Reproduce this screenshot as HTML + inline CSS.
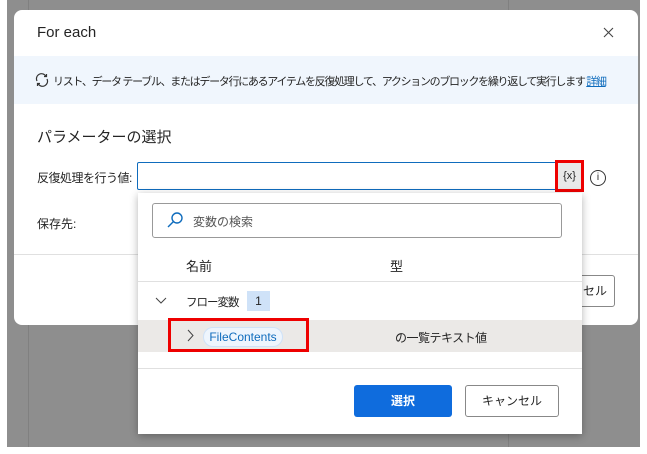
<!DOCTYPE html><html><head><meta charset="utf-8"><style>
*{box-sizing:border-box;margin:0;padding:0}
body{width:647px;height:454px;background:#fff;position:relative;overflow:hidden;font-family:"Liberation Sans","Noto Sans CJK JP",sans-serif;color:#242424}
.bg{position:absolute;left:7px;top:0;width:633px;height:447px;background:#8e8e8e}
.a{position:absolute}
</style></head><body>
<div class="bg"></div>
<div class="a" style="left:28px;top:0;width:1px;height:447px;background:#808080"></div>
<div class="a" style="left:508px;top:0;width:1px;height:447px;background:#808080"></div>
<div class="a" style="left:14px;top:10px;width:624px;height:315px;background:#fff;border-radius:8px"></div>
<div class="a" style="left:37px;top:24px;font-size:15px">For each</div>
<svg class="a" style="left:603px;top:27px" width="11" height="11"><path d="M1 1l9 9M10 1l-9 9" stroke="#444" stroke-width="1.1"/></svg>
<div class="a" style="left:14px;top:56px;width:624px;height:48px;background:#f0f6fd"></div>
<svg class="a" style="left:35px;top:73px" width="14" height="14" viewBox="0 0 14 14" fill="none" stroke="#333" stroke-width="1.2"><path d="M2 8A5 5 0 0 1 11 3.5M12 6A5 5 0 0 1 3 10.5M9 3.5h2.5V1M5 10.5H2.5V13"/></svg>
<div class="a" style="left:53px;top:73px;font-size:11px;letter-spacing:-1.3px;white-space:nowrap">リスト、データ テーブル、またはデータ行にあるアイテムを反復処理して、アクションのブロックを繰り返して実行します <span style="color:#0f6cbd;text-decoration:underline">詳細</span></div>
<div class="a" style="left:37px;top:126px;font-size:15px">パラメーターの選択</div>
<div class="a" style="left:37px;top:169px;font-size:12px;letter-spacing:-0.5px">反復処理を行う値:</div>
<div class="a" style="left:137px;top:162px;width:445px;height:28px;border:1px solid #0f6cbd;border-radius:2px;background:#fff"></div>
<div class="a" style="left:555px;top:160px;width:29px;height:32px;border:3px solid #e00;background:#e8e8e8;font-size:11px;text-align:center;line-height:26px">{x}</div>
<div class="a" style="left:590px;top:170px;width:16px;height:16px;border:1px solid #333;border-radius:50%;font-size:10px;text-align:center;line-height:14px">i</div>
<div class="a" style="left:37px;top:215px;font-size:12px">保存先:</div>
<div class="a" style="left:14px;top:254px;width:624px;height:1px;background:#e0e0e0"></div>
<div class="a" style="left:560px;top:275px;width:55px;height:32px;border:1px solid #888;border-radius:3px;background:#fff;font-size:12px;line-height:30px;padding-left:22px">セル</div>
<div class="a" style="left:138px;top:193px;width:444px;height:241px;background:#fff;box-shadow:0 2px 8px rgba(0,0,0,.3)"></div>
<div class="a" style="left:152px;top:203px;width:410px;height:35px;border:1px solid #999;border-radius:3px"></div>
<svg class="a" style="left:166px;top:211px" width="18" height="18" viewBox="0 0 18 18" fill="none" stroke="#0f6cbd" stroke-width="1.4"><circle cx="11" cy="7" r="5"/><path d="M7.5 10.5L2 16"/></svg>
<div class="a" style="left:193px;top:213px;font-size:12px;color:#555">変数の検索</div>
<div class="a" style="left:186px;top:256px;font-size:13px">名前</div>
<div class="a" style="left:390px;top:256px;font-size:13px">型</div>
<div class="a" style="left:138px;top:281px;width:444px;height:1px;background:#e0e0e0"></div>
<svg class="a" style="left:155px;top:297px" width="12" height="8"><path d="M1 1l5 5 5-5" fill="none" stroke="#444"/></svg>
<div class="a" style="left:186px;top:294px;font-size:11.5px;letter-spacing:-1px">フロー変数</div>
<div class="a" style="left:247px;top:291px;width:23px;height:20px;background:#cfe2f8;font-size:12px;text-align:center;line-height:20px">1</div>
<div class="a" style="left:138px;top:320px;width:444px;height:32px;background:#ebe9e7"></div>
<svg class="a" style="left:187px;top:329px" width="8" height="13"><path d="M1 1l5 5.5-5 5.5" fill="none" stroke="#444"/></svg>
<div class="a" style="left:203px;top:327px;width:80px;height:20px;background:#eef5fd;border:1px solid #cfe2f8;border-radius:10px;font-size:12px;color:#0f6cbd;text-align:center;line-height:18px">FileContents</div>
<div class="a" style="left:168px;top:318px;width:141px;height:34px;border:3px solid #e00"></div>
<div class="a" style="left:395px;top:329px;font-size:12px;letter-spacing:-0.5px">の一覧テキスト値</div>
<div class="a" style="left:138px;top:368px;width:444px;height:1px;background:#e0e0e0"></div>
<div class="a" style="left:354px;top:385px;width:98px;height:32px;background:#0f6cdd;border-radius:3px;color:#fff;font-size:12px;font-weight:bold;text-align:center;line-height:32px">選択</div>
<div class="a" style="left:465px;top:385px;width:94px;height:32px;border:1px solid #888;border-radius:3px;font-size:12px;text-align:center;line-height:30px">キャンセル</div>
</body></html>
